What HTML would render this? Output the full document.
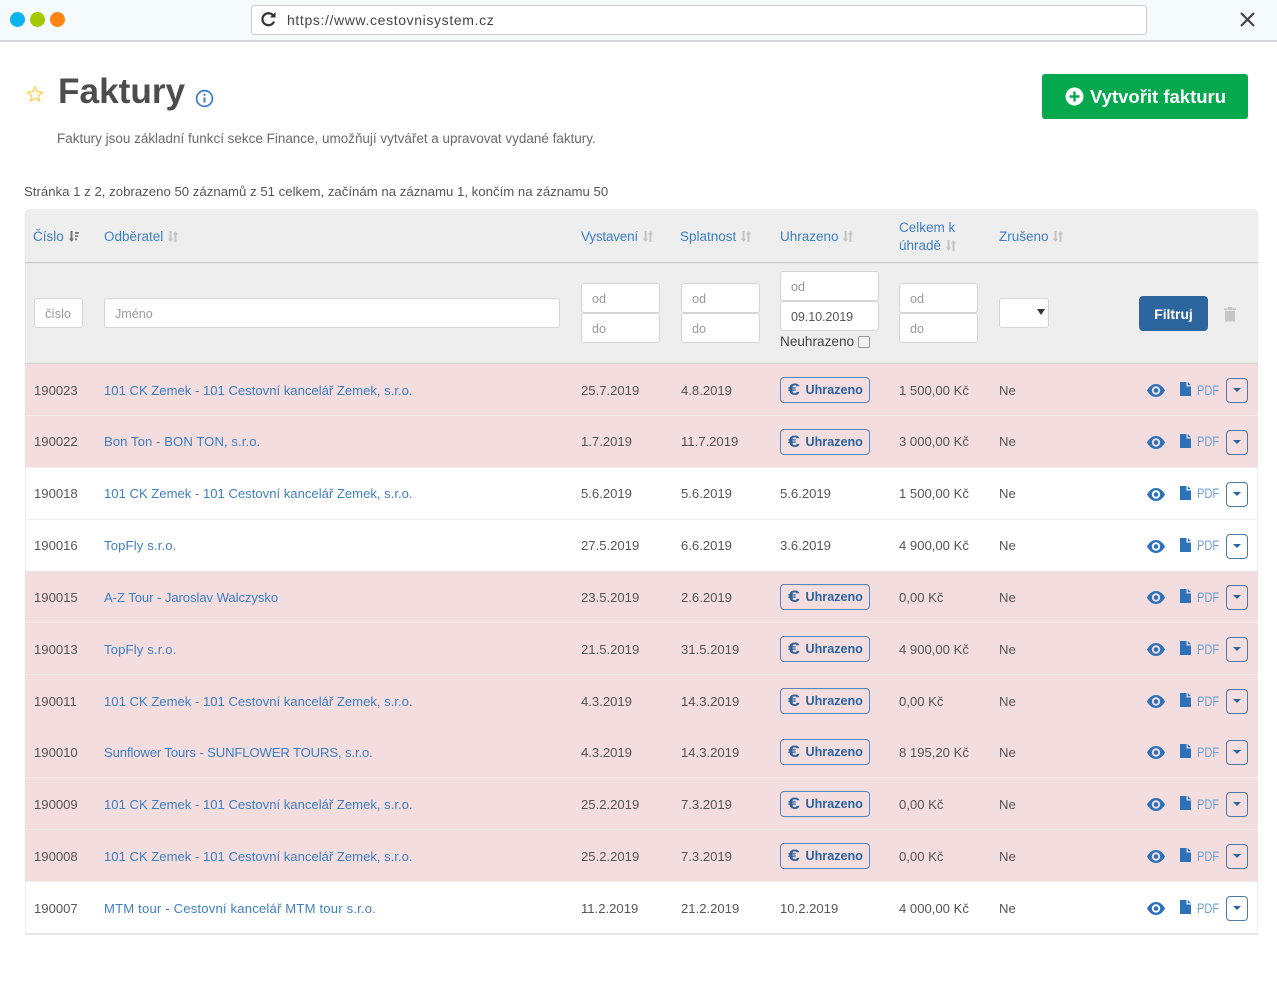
<!DOCTYPE html>
<html lang="cs"><head><meta charset="utf-8"><title>Faktury</title>
<style>
*{box-sizing:border-box}
html,body{margin:0;padding:0;background:#fff}
body{position:relative;width:1277px;height:985px;overflow:hidden;font-family:"Liberation Sans",sans-serif;font-size:13.1px;color:#555}
.a,.r span,.r a,.r svg,.r i{position:absolute}
.a{white-space:nowrap}
a{color:#3f7fc4;text-decoration:none}
.bar{left:0;top:0;width:1277px;height:42px;background:#f5fafd;border-bottom:2px solid #d4d6d8}
.dot{width:15px;height:15px;border-radius:50%;top:12px}
.url{left:251px;top:5px;width:896px;height:30px;background:#fff;border:1px solid #ccc;border-radius:3px}
.thead{left:25px;top:209px;width:1233px;height:53px;background:#eee;border-radius:4px 4px 0 0;box-shadow:0 1px 1px #c4c4c4}
.tf{left:25px;top:262px;width:1233px;height:102px;background:#eee;box-shadow:0 -1px 1px #ccc inset}
.h{line-height:18px;color:#3f7fc4;font-size:13.500px}
.s{vertical-align:-1px;margin-left:1px}
.inp{position:absolute;background:#fff;border:1px solid #d5d5d5;border-radius:3px;color:#999;padding-left:10px;height:30px;line-height:31px;width:79px;font-size:12.600px}
.r{position:absolute;left:25px;width:1233px;height:52px;line-height:54px;white-space:nowrap;border-bottom:1px solid #f5eaea}
.p{background:#f3dddf}.w{background:#fff;border-bottom-color:#eee;box-shadow:inset 1px 0 #eee,inset -1px 0 #eee}
.r .c1{left:9px}.r .c2{left:79px}.r .c3{left:556px}.r .c4{left:656px}.r .c5{left:755px}.r .c6{left:874px}.r .c7{left:974px}
.r .u{left:755px;top:13px;width:90px;height:26px;border:1.500px solid #5c84b4;border-radius:4px;color:#2c639e;font-weight:bold;font-size:12.600px;line-height:25px;padding-left:24.500px;background:transparent}
.r .u i{left:7px;top:0;font-style:normal;font-weight:bold;font-size:17px;line-height:24px;transform:scaleX(1.25);transform-origin:0 0}
.r .pdf{left:1172px;color:#6d9fd8;font-size:13.500px;transform:scaleX(.82);transform-origin:0 0}
.r .dd{left:1201px;top:14px;width:22px;height:25px;border:1.500px solid #4c79ab;border-radius:4px}
.r .dd i{left:6px;top:9px;border:4px solid transparent;border-top:4px solid #2c639e;border-bottom:0}
</style></head><body>
<svg width="0" height="0" style="position:absolute"><defs>
<g id="eye"><path fill-rule="evenodd" d="M0 6.500C2.500 2 5.500 0 9 0s6.500 2 9 6.500C15.500 11 12.500 13 9 13S2.500 11 0 6.500zM9 2.300a4.200 4.200 0 1 0 0 8.400 4.200 4.200 0 0 0 0-8.400z" fill="#2d72b8"/><circle cx="9" cy="6.500" r="2.300" fill="#2d72b8"/></g>
<path id="doc" d="M0 0h6.500v4.500H11V14H0zM7.800 0L11 3.300H7.800z" fill="#2d72b8"/>
<path id="ud" d="M1.500 0h2v7.500H5L2.500 11 0 7.500h1.500zM6.500 11h2V3.500H10L7.500 0 5 3.500h1.500z"/>
<path id="sd" d="M1.500 0h2v7.500H5L2.500 11 0 7.500h1.500zM6 1h4v1.800H6zM6 4.200h3v1.800H6zM6 7.400h2v1.800H6z"/>
</defs></svg>
<div class="a bar"></div>
<div class="a dot" style="left:10px;background:#0db4ee"></div>
<div class="a dot" style="left:30px;background:#a6c800"></div>
<div class="a dot" style="left:50px;background:#ff8411"></div>
<div class="a url"></div>
<svg class="a" style="left:260px;top:11px" width="17" height="17" viewBox="0 0 17 17" fill="none"><path d="M13.500 5A6 6 0 1 0 14 10.500" stroke="#333" stroke-width="2.200"/><path d="M10 6.500h5.500V1z" fill="#333"/></svg>
<div class="a" style="left:287px;top:11px;font-size:14px;line-height:18px;color:#444;letter-spacing:.63px">https://www.cestovnisystem.cz</div>
<svg class="a" style="left:1239px;top:11px" width="17" height="17" viewBox="0 0 17 17"><path d="M2 2l13 13M15 2L2 15" stroke="#444" stroke-width="2.200"/></svg>

<svg class="a" style="left:26px;top:85px" width="18" height="18" viewBox="0 0 18 18"><path d="M9 1.800l2.200 4.800 5.200.6-3.900 3.500 1.100 5.200L9 13.300l-4.600 2.600 1.100-5.200-3.900-3.500 5.200-.6z" fill="#fff" stroke="#fbd25c" stroke-width="1.400"/></svg>
<div class="a" style="left:58px;top:71px;font-size:35.200px;line-height:42px;font-weight:bold;color:#4d4d4d">Faktury</div>
<svg class="a" style="left:195px;top:89px" width="19" height="19" viewBox="0 0 19 19" fill="none"><circle cx="9.500" cy="9.500" r="7.900" stroke="#3b7cc6" stroke-width="1.700"/><path d="M9.500 8.500v5" stroke="#3b7cc6" stroke-width="2"/><circle cx="9.500" cy="5.800" r="1.100" fill="#3b7cc6"/></svg>
<div class="a" style="left:57px;top:130px;line-height:18px;color:#6a6a6a;font-size:13.470px">Faktury jsou základní funkcí sekce Finance, umožňují vytvářet a upravovat vydané faktury.</div>
<div class="a" style="left:1042px;top:74px;width:206px;height:45px;background:#05a84d;border-radius:3px"></div>
<svg class="a" style="left:1065px;top:87px" width="19" height="19" viewBox="0 0 19 19"><circle cx="9.500" cy="9.500" r="9" fill="#fff"/><path d="M9.500 4.500v10M4.500 9.500h10" stroke="#05a84d" stroke-width="2.400"/></svg>
<div class="a" style="left:1090px;top:85px;font-size:18.500px;line-height:24px;font-weight:bold;color:#fff">Vytvořit fakturu</div>
<div class="a" style="left:24px;top:183px;line-height:18px;color:#555;font-size:13.210px">Stránka 1 z 2, zobrazeno 50 záznamů z 51 celkem, začínám na záznamu 1, končím na záznamu 50</div>

<div class="a tf"></div>
<div class="a thead"></div>
<div class="a h" style="left:33px;top:228px">Číslo <svg class="s" width="10" height="11" fill="#777"><use href="#sd"/></svg></div>
<div class="a h" style="left:104px;top:228px">Odběratel <svg class="s" width="10" height="11" fill="#c4c4c4"><use href="#ud"/></svg></div>
<div class="a h" style="left:581px;top:228px;letter-spacing:-.2px">Vystavení <svg class="s" width="10" height="11" fill="#c4c4c4"><use href="#ud"/></svg></div>
<div class="a h" style="left:680px;top:228px">Splatnost <svg class="s" width="10" height="11" fill="#c4c4c4"><use href="#ud"/></svg></div>
<div class="a h" style="left:780px;top:228px">Uhrazeno <svg class="s" width="10" height="11" fill="#c4c4c4"><use href="#ud"/></svg></div>
<div class="a h" style="left:899px;top:219px">Celkem k<br>úhradě <svg class="s" width="10" height="11" fill="#c4c4c4"><use href="#ud"/></svg></div>
<div class="a h" style="left:999px;top:228px">Zrušeno <svg class="s" width="10" height="11" fill="#c4c4c4"><use href="#ud"/></svg></div>

<div class="inp" style="left:34px;top:298px;width:49px">číslo</div>
<div class="inp" style="left:104px;top:298px;width:456px">Jméno</div>
<div class="inp" style="left:581px;top:283px">od</div><div class="inp" style="left:581px;top:313px">do</div>
<div class="inp" style="left:681px;top:283px">od</div><div class="inp" style="left:681px;top:313px">do</div>
<div class="inp" style="left:780px;top:271px;width:99px">od</div><div class="inp" style="left:780px;top:301px;width:99px;color:#555;letter-spacing:-.1px">09.10.2019</div>
<div class="a" style="left:780px;top:333px;line-height:18px;color:#444;font-size:13.600px">Neuhrazeno</div>
<div class="a" style="left:858px;top:336px;width:12px;height:12px;background:#f2f2f2;border:1px solid #999;border-radius:2px"></div>
<div class="inp" style="left:899px;top:283px">od</div><div class="inp" style="left:899px;top:313px">do</div>
<div class="inp" style="left:999px;top:298px;width:50px"></div>
<div class="a" style="left:1037px;top:309px;border:4px solid transparent;border-top:6px solid #333;border-bottom:0"></div>
<div class="a" style="left:1139px;top:296px;width:69px;height:35px;background:#2d659f;border-radius:4px;color:#fff;font-weight:bold;text-align:center;line-height:36px;font-size:13.900px">Filtruj</div>
<svg class="a" style="left:1223px;top:306px" width="14" height="16" viewBox="0 0 14 16"><path d="M1 2.500h4V1h4v1.500h4V4H1zM2 5h10v10.500H2z" fill="#c6c6c6"/></svg>

<div class="r p" style="top:364px"><span class="c1">190023</span><a class="c2">101 CK Zemek - 101 Cestovní kancelář Zemek, s.r.o.</a><span class="c3">25.7.2019</span><span class="c4">4.8.2019</span><span class="u"><i>€</i>Uhrazeno</span><span class="c6">1 500,00 Kč</span><span class="c7">Ne</span><svg style="left:1122px;top:20px" width="18" height="13"><use href="#eye"/></svg><svg style="left:1155px;top:18px" width="11" height="14"><use href="#doc"/></svg><span class="pdf">PDF</span><span class="dd"><i></i></span></div>
<div class="r p" style="top:416px;line-height:52px"><span class="c1">190022</span><a class="c2" style="letter-spacing:.08px">Bon Ton - BON TON, s.r.o.</a><span class="c3">1.7.2019</span><span class="c4">11.7.2019</span><span class="u"><i>€</i>Uhrazeno</span><span class="c6">3 000,00 Kč</span><span class="c7">Ne</span><svg style="left:1122px;top:20px" width="18" height="13"><use href="#eye"/></svg><svg style="left:1155px;top:18px" width="11" height="14"><use href="#doc"/></svg><span class="pdf">PDF</span><span class="dd"><i></i></span></div>
<div class="r w" style="top:468px;line-height:52px"><span class="c1">190018</span><a class="c2">101 CK Zemek - 101 Cestovní kancelář Zemek, s.r.o.</a><span class="c3">5.6.2019</span><span class="c4">5.6.2019</span><span class="c5">5.6.2019</span><span class="c6">1 500,00 Kč</span><span class="c7">Ne</span><svg style="left:1122px;top:20px" width="18" height="13"><use href="#eye"/></svg><svg style="left:1155px;top:18px" width="11" height="14"><use href="#doc"/></svg><span class="pdf">PDF</span><span class="dd"><i></i></span></div>
<div class="r w" style="top:520px;line-height:52px"><span class="c1">190016</span><a class="c2" style="letter-spacing:.15px">TopFly s.r.o.</a><span class="c3">27.5.2019</span><span class="c4">6.6.2019</span><span class="c5">3.6.2019</span><span class="c6">4 900,00 Kč</span><span class="c7">Ne</span><svg style="left:1122px;top:20px" width="18" height="13"><use href="#eye"/></svg><svg style="left:1155px;top:18px" width="11" height="14"><use href="#doc"/></svg><span class="pdf">PDF</span><span class="dd"><i></i></span></div>
<div class="r p" style="top:571px"><span class="c1">190015</span><a class="c2" style="letter-spacing:-.07px">A-Z Tour - Jaroslav Walczysko</a><span class="c3">23.5.2019</span><span class="c4">2.6.2019</span><span class="u"><i>€</i>Uhrazeno</span><span class="c6">0,00 Kč</span><span class="c7">Ne</span><svg style="left:1122px;top:20px" width="18" height="13"><use href="#eye"/></svg><svg style="left:1155px;top:18px" width="11" height="14"><use href="#doc"/></svg><span class="pdf">PDF</span><span class="dd"><i></i></span></div>
<div class="r p" style="top:623px"><span class="c1">190013</span><a class="c2" style="letter-spacing:.15px">TopFly s.r.o.</a><span class="c3">21.5.2019</span><span class="c4">31.5.2019</span><span class="u"><i>€</i>Uhrazeno</span><span class="c6">4 900,00 Kč</span><span class="c7">Ne</span><svg style="left:1122px;top:20px" width="18" height="13"><use href="#eye"/></svg><svg style="left:1155px;top:18px" width="11" height="14"><use href="#doc"/></svg><span class="pdf">PDF</span><span class="dd"><i></i></span></div>
<div class="r p" style="top:675px"><span class="c1">190011</span><a class="c2">101 CK Zemek - 101 Cestovní kancelář Zemek, s.r.o.</a><span class="c3">4.3.2019</span><span class="c4">14.3.2019</span><span class="u"><i>€</i>Uhrazeno</span><span class="c6">0,00 Kč</span><span class="c7">Ne</span><svg style="left:1122px;top:20px" width="18" height="13"><use href="#eye"/></svg><svg style="left:1155px;top:18px" width="11" height="14"><use href="#doc"/></svg><span class="pdf">PDF</span><span class="dd"><i></i></span></div>
<div class="r p" style="top:726px"><span class="c1">190010</span><a class="c2" style="letter-spacing:-.12px">Sunflower Tours - SUNFLOWER TOURS, s.r.o.</a><span class="c3">4.3.2019</span><span class="c4">14.3.2019</span><span class="u"><i>€</i>Uhrazeno</span><span class="c6">8 195,20 Kč</span><span class="c7">Ne</span><svg style="left:1122px;top:20px" width="18" height="13"><use href="#eye"/></svg><svg style="left:1155px;top:18px" width="11" height="14"><use href="#doc"/></svg><span class="pdf">PDF</span><span class="dd"><i></i></span></div>
<div class="r p" style="top:778px"><span class="c1">190009</span><a class="c2">101 CK Zemek - 101 Cestovní kancelář Zemek, s.r.o.</a><span class="c3">25.2.2019</span><span class="c4">7.3.2019</span><span class="u"><i>€</i>Uhrazeno</span><span class="c6">0,00 Kč</span><span class="c7">Ne</span><svg style="left:1122px;top:20px" width="18" height="13"><use href="#eye"/></svg><svg style="left:1155px;top:18px" width="11" height="14"><use href="#doc"/></svg><span class="pdf">PDF</span><span class="dd"><i></i></span></div>
<div class="r p" style="top:830px"><span class="c1">190008</span><a class="c2">101 CK Zemek - 101 Cestovní kancelář Zemek, s.r.o.</a><span class="c3">25.2.2019</span><span class="c4">7.3.2019</span><span class="u"><i>€</i>Uhrazeno</span><span class="c6">0,00 Kč</span><span class="c7">Ne</span><svg style="left:1122px;top:20px" width="18" height="13"><use href="#eye"/></svg><svg style="left:1155px;top:18px" width="11" height="14"><use href="#doc"/></svg><span class="pdf">PDF</span><span class="dd"><i></i></span></div>
<div class="r w" style="top:882px;height:53px;border-bottom:2px solid #e6e6e6"><span class="c1">190007</span><a class="c2" style="letter-spacing:.18px">MTM tour - Cestovní kancelář MTM tour s.r.o.</a><span class="c3">11.2.2019</span><span class="c4">21.2.2019</span><span class="c5">10.2.2019</span><span class="c6">4 000,00 Kč</span><span class="c7">Ne</span><svg style="left:1122px;top:20px" width="18" height="13"><use href="#eye"/></svg><svg style="left:1155px;top:18px" width="11" height="14"><use href="#doc"/></svg><span class="pdf">PDF</span><span class="dd"><i></i></span></div>
</body></html>
